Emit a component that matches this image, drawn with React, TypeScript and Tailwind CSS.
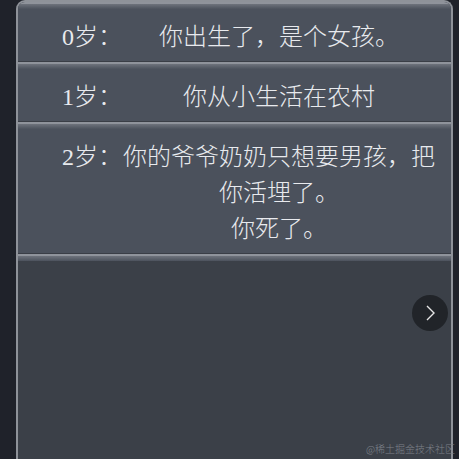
import React from "react";

const rows: { age: string; lines: string[] }[] = [
  { age: "0", lines: ["你出生了，是个女孩。"] },
  { age: "1", lines: ["你从小生活在农村"] },
  { age: "2", lines: ["你的爷爷奶奶只想要男孩，把你活埋了。", "你死了。"] },
];

function Bevel({ first }: { first?: boolean }) {
  return (
    <div className="flex flex-col shrink-0">
      {!first && <div className="h-px bg-[#3a3e46]" />}
      <div className="h-[2px] bg-[#8f939b]" />
      <div className="h-[5px] bg-[linear-gradient(to_bottom,#6e737c,#4c525d)]" />
    </div>
  );
}

export default function App() {
  return (
    <div
      className="relative w-[459px] h-[459px] overflow-hidden bg-[#1f222a] text-[#e8eaee] font-light"
      style={{ fontFamily: '"Liberation Serif", "Noto Sans CJK SC", serif' }}
    >
      <div className="ml-[16px] w-[437px] h-full flex flex-col rounded-t-[9px] border-x-2 border-t-2 border-[#8e9299] bg-[#3b4048] overflow-hidden">
        {rows.map((r, i) => (
          <div key={r.age} className="flex flex-col bg-[#4b515c]">
            <Bevel first={i === 0} />
            <div className="flex pl-[44px] pr-[15px] pt-[10px] pb-[6px] text-[24px] leading-[36px]">
              <div className="w-[60px] shrink-0 whitespace-nowrap">{r.age}岁：</div>
              <div className="flex-1 text-center">
                {r.lines.map((l) => (
                  <div key={l}>{l}</div>
                ))}
              </div>
            </div>
          </div>
        ))}
        <Bevel />
        <div className="flex-1 bg-[#3b4048]" />
      </div>

      <button className="absolute left-[412px] top-[295px] w-[36px] h-[36px] rounded-full bg-[#212429] flex items-center justify-center">
        <svg width="12" height="16" viewBox="0 0 12 16" fill="none">
          <polyline points="3,1 10,8 3,15" stroke="#e6e6e6" strokeWidth="1.4" />
        </svg>
      </button>

      <div
        className="absolute right-[4px] top-[442px] text-[10px] leading-[14px] text-[#7d8188] whitespace-nowrap"
        style={{ fontFamily: '"Noto Sans CJK SC", sans-serif' }}
      >
        @稀土掘金技术社区
      </div>
    </div>
  );
}
